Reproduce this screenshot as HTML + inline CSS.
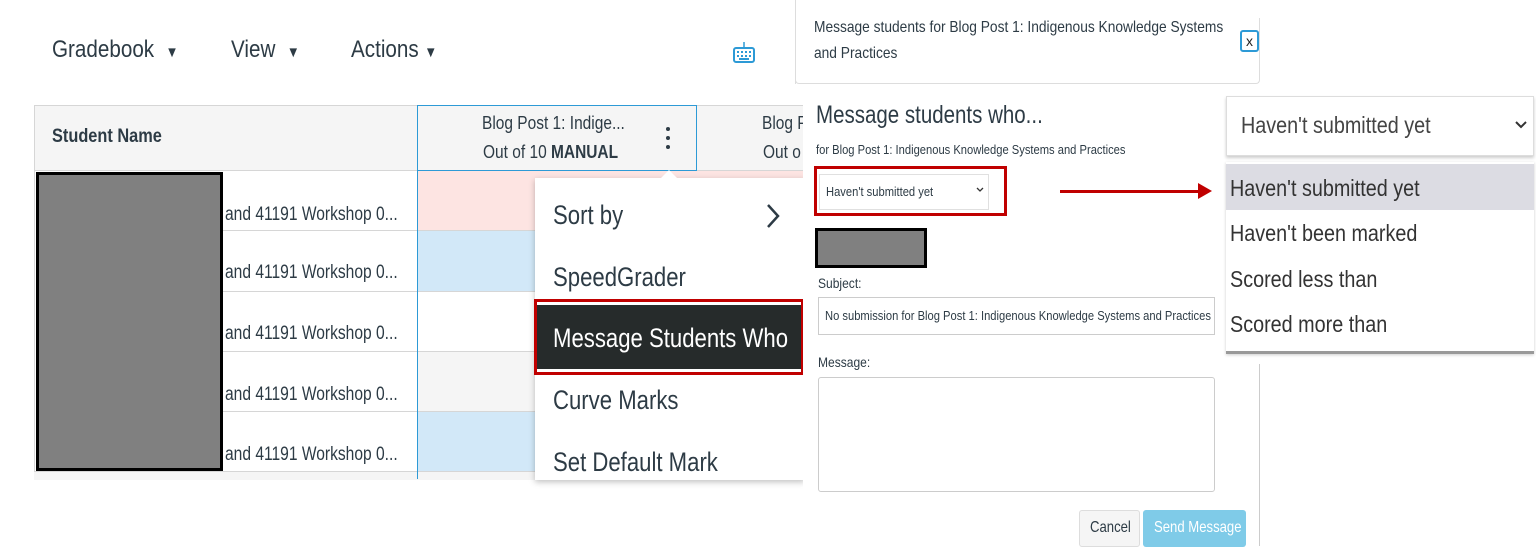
<!DOCTYPE html>
<html><head><meta charset="utf-8"><style>
*{margin:0;padding:0;box-sizing:border-box}
body{width:1536px;height:554px;background:#fff;position:relative;overflow:hidden;font-family:"Liberation Sans",sans-serif;color:#2d3b45}
.a{position:absolute}
.s{position:absolute;white-space:nowrap;line-height:1;transform-origin:0 50%;transform:scaleX(.86)}
.m{transform:scaleX(.82)}
</style></head><body>
<!-- toolbar -->
<div class="s" style="left:52px;top:38px;font-size:24px">Gradebook&nbsp; <span style="font-size:15px">▼</span></div>
<div class="s" style="left:231px;top:38px;font-size:24px">View&nbsp; <span style="font-size:15px">▼</span></div>
<div class="s" style="left:351px;top:38px;font-size:24px">Actions <span style="font-size:15px">▼</span></div>
<svg class="a" style="left:731px;top:40px" width="26" height="26" viewBox="0 0 26 26"><path d="M13 2v5" stroke="#2d9ad6" stroke-width="1.5" fill="none"/><rect x="3" y="8" width="20" height="14" rx="2" fill="none" stroke="#2d9ad6" stroke-width="2"/><g fill="#2d9ad6"><rect x="6" y="11" width="2" height="2"/><rect x="10" y="11" width="2" height="2"/><rect x="14" y="11" width="2" height="2"/><rect x="18" y="11" width="2" height="2"/><rect x="6" y="15" width="2" height="2"/><rect x="10" y="15" width="2" height="2"/><rect x="14" y="15" width="2" height="2"/><rect x="18" y="15" width="2" height="2"/><rect x="8" y="18" width="10" height="2"/></g></svg>
<!-- table -->
<div class="a" style="left:34px;top:105px;width:770px;height:66px;background:#f5f5f5;border:1px solid #d6d6d6"></div>
<div class="s" style="left:52px;top:127px;font-size:19px;font-weight:bold">Student Name</div>
<div class="a" style="left:417px;top:105px;width:280px;height:66px;border:1.5px solid #2d9ad6;background:#f5f5f5"></div>
<div class="s" style="left:482px;top:114px;font-size:18px">Blog Post 1: Indige...</div>
<div class="s" style="left:483px;top:143px;font-size:18px">Out of 10 <b>MANUAL</b></div>
<div class="a" style="left:666px;top:127px;width:4px;height:4px;border-radius:2px;background:#2d3b45;box-shadow:0 9px 0 #2d3b45,0 18px 0 #2d3b45"></div>
<div class="s" style="left:762px;top:114px;font-size:18px">Blog P</div>
<div class="s" style="left:763px;top:143px;font-size:18px">Out o</div>
<!-- rows -->
<div class="a" style="left:34px;top:171px;width:770px;height:307px;border-left:1px solid #d6d6d6"></div>
<div class="a" style="left:222px;top:230px;width:582px;height:1px;background:#d6d6d6"></div>
<div class="a" style="left:222px;top:291px;width:582px;height:1px;background:#d6d6d6"></div>
<div class="a" style="left:222px;top:351px;width:582px;height:1px;background:#d6d6d6"></div>
<div class="a" style="left:222px;top:411px;width:582px;height:1px;background:#d6d6d6"></div>
<div class="a" style="left:34px;top:471px;width:770px;height:1px;background:#d6d6d6"></div>
<div class="a" style="left:417px;top:171px;width:387px;height:59px;background:#fde4e2"></div>
<div class="a" style="left:417px;top:231px;width:387px;height:60px;background:#d2e8f8"></div>
<div class="a" style="left:417px;top:352px;width:387px;height:59px;background:#f5f5f5"></div>
<div class="a" style="left:417px;top:412px;width:387px;height:59px;background:#d2e8f8"></div>
<div class="a" style="left:34px;top:472px;width:770px;height:8px;background:#f5f5f5"></div>
<div class="a" style="left:417px;top:171px;width:1px;height:308px;background:#2d9ad6"></div>
<div class="s m" style="left:225px;top:205px;font-size:19px">and 41191 Workshop 0...</div>
<div class="s m" style="left:225px;top:263px;font-size:19px">and 41191 Workshop 0...</div>
<div class="s m" style="left:225px;top:324px;font-size:19px">and 41191 Workshop 0...</div>
<div class="s m" style="left:225px;top:385px;font-size:19px">and 41191 Workshop 0...</div>
<div class="s m" style="left:225px;top:445px;font-size:19px">and 41191 Workshop 0...</div>
<div class="a" style="left:36px;top:172px;width:187px;height:299px;background:#808080;border:3px solid #000"></div>
<!-- menu -->
<div class="a" style="left:535px;top:178px;width:270px;height:302px;background:#fff;box-shadow:0 2px 6px rgba(0,0,0,.25)"></div>
<div class="a" style="left:660px;top:170px;width:0;height:0;border-left:9px solid transparent;border-right:9px solid transparent;border-bottom:9px solid #fff"></div>
<div class="s m" style="left:553px;top:202px;font-size:27px">Sort by</div>
<svg class="a" style="left:765px;top:203px" width="16" height="26"><path d="M3 2l10 11L3 24" stroke="#2d3b45" stroke-width="2.5" fill="none"/></svg>
<div class="s m" style="left:553px;top:264px;font-size:27px">SpeedGrader</div>
<div class="a" style="left:534px;top:299px;width:270px;height:76px;border:3px solid #c00000;background:#fff;padding:3px 0"><div style="background:#262b2b;height:64px"></div></div>
<div class="s m" style="left:553px;top:325px;font-size:27px;color:#fff">Message Students Who</div>
<div class="s m" style="left:553px;top:387px;font-size:27px">Curve Marks</div>
<div class="s m" style="left:553px;top:449px;font-size:27px">Set Default Mark</div>
<!-- modal -->
<div class="a" style="left:803px;top:0;width:460px;height:554px;background:#fff"></div>
<div class="a" style="left:795px;top:18px;width:465px;height:66px;border:1px solid #ddd;border-top:none;border-radius:0 0 4px 4px;background:#fff"></div>
<div class="a" style="left:795px;top:0;width:1px;height:84px;background:#ddd"></div>
<div class="s" style="left:814px;top:20px;font-size:16px">Message students for Blog Post 1: Indigenous Knowledge Systems</div>
<div class="s" style="left:814px;top:46px;font-size:16px">and Practices</div>
<div class="a" style="left:1240px;top:30px;width:19px;height:22px;border:2px solid #2d9ad6;border-radius:3px;font-size:14px;line-height:18px;text-align:center;color:#222">x</div>
<div class="s m" style="left:816px;top:103px;font-size:25px">Message students who...</div>
<div class="s" style="left:816px;top:143px;font-size:13px">for Blog Post 1: Indigenous Knowledge Systems and Practices</div>
<div class="a" style="left:814px;top:166px;width:193px;height:50px;border:3px solid #c00000"></div>
<div class="a" style="left:819px;top:174px;width:170px;height:36px;border:1px solid #e0e0e0;background:#fff"></div>
<div class="s" style="left:826px;top:185px;font-size:13px">Haven't submitted yet</div>
<svg class="a" style="left:976px;top:187px" width="8" height="6"><path d="M1 1l3 3 3-3" stroke="#333" stroke-width="1.3" fill="none"/></svg>
<div class="a" style="left:1060px;top:190px;width:140px;height:3px;background:#c00000"></div>
<div class="a" style="left:1198px;top:183px;width:0;height:0;border-top:8px solid transparent;border-bottom:8px solid transparent;border-left:14px solid #c00000"></div>
<div class="a" style="left:815px;top:228px;width:112px;height:40px;background:#808080;border:3px solid #000"></div>
<div class="s" style="left:818px;top:276px;font-size:14px">Subject:</div>
<div class="a" style="left:818px;top:297px;width:397px;height:38px;border:1px solid #ccc"></div>
<div class="s" style="left:825px;top:309px;font-size:13px">No submission for Blog Post 1: Indigenous Knowledge Systems and Practices</div>
<div class="s" style="left:818px;top:355px;font-size:14px">Message:</div>
<div class="a" style="left:818px;top:377px;width:397px;height:115px;border:1px solid #ccc;border-radius:3px"></div>
<div class="a" style="left:1079px;top:510px;width:61px;height:37px;background:#f5f5f5;border:1px solid #ddd;border-radius:3px"></div>
<div class="s m" style="left:1090px;top:520px;font-size:16px">Cancel</div>
<div class="a" style="left:1143px;top:510px;width:103px;height:37px;background:#7fcbe8;border-radius:3px"></div>
<div class="s m" style="left:1154px;top:520px;font-size:16px;color:#fff">Send Message</div>
<div class="a" style="left:1259px;top:364px;width:1px;height:182px;background:#ccc"></div>
<!-- right dropdown -->
<div class="a" style="left:1226px;top:96px;width:308px;height:60px;background:#fff;border:1px solid #ddd;box-shadow:0 2px 3px rgba(0,0,0,.2)"></div>
<div class="s" style="left:1241px;top:114px;font-size:23px;color:#444">Haven't submitted yet</div>
<svg class="a" style="left:1514px;top:120px" width="14" height="10"><path d="M2 2l5 5 5-5" stroke="#333" stroke-width="2" fill="none"/></svg>
<div class="a" style="left:1226px;top:162px;width:308px;height:192px;background:#fff;border-bottom:3px solid #999;box-shadow:0 1px 3px rgba(0,0,0,.2)"></div>
<div class="a" style="left:1226px;top:164px;width:308px;height:46px;background:#dcdce3"></div>
<div class="s" style="left:1230px;top:177px;font-size:23px;color:#333">Haven't submitted yet</div>
<div class="s" style="left:1230px;top:222px;font-size:23px;color:#333">Haven't been marked</div>
<div class="s" style="left:1230px;top:268px;font-size:23px;color:#333">Scored less than</div>
<div class="s" style="left:1230px;top:313px;font-size:23px;color:#333">Scored more than</div>
</body></html>
